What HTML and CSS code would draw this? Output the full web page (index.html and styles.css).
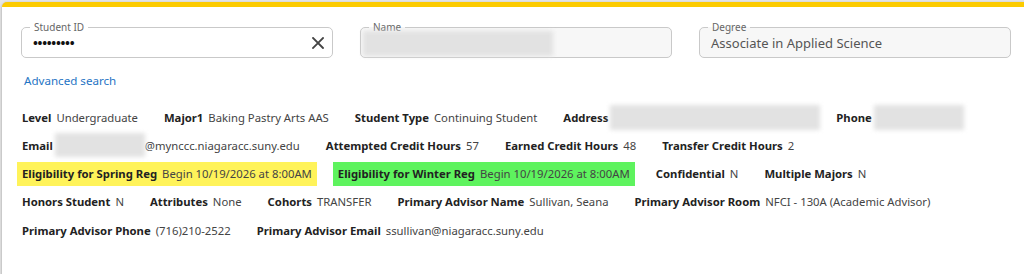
FILE: index.html
```html
<!DOCTYPE html>
<html lang="en">
<head>
<meta charset="UTF-8" />
<title>Student Lookup</title>
<link rel="stylesheet" href="styles.css">
</head>
<body>

<div class="card">
  <div class="fields">
    <fieldset class="field">
      <legend>Student ID</legend>
      <span class="field-value dots">•••••••••</span>
      <svg class="clear" width="12" height="12" viewBox="0 0 12 12">
        <path d="M1 1 L11 11 M11 1 L1 11" stroke="#444" stroke-width="1.8" stroke-linecap="square" />
      </svg>
    </fieldset>
    <fieldset class="field readonly">
      <legend>Name</legend>
      <span class="blur name-blur"></span>
    </fieldset>
    <fieldset class="field readonly">
      <legend>Degree</legend>
      <span class="field-value muted">Associate in Applied Science</span>
    </fieldset>
  </div>

  <a class="adv-link" href="#">Advanced search</a>

  <div class="details">
    <div class="row">
      <div class="item"><b>Level</b><span>Undergraduate</span></div>
      <div class="item"><b>Major1</b><span>Baking Pastry Arts AAS</span></div>
      <div class="item"><b>Student Type</b><span>Continuing Student</span></div>
      <div class="item"><b>Address</b><span class="blur addr-blur"></span></div>
      <div class="item"><b>Phone</b><span class="blur phone-blur"></span></div>
    </div>
    <div class="row">
      <div class="item"><b>Email</b><span class="blur email-blur"></span><span class="tight">@mynccc.niagaracc.suny.edu</span></div>
      <div class="item"><b>Attempted Credit Hours</b><span>57</span></div>
      <div class="item"><b>Earned Credit Hours</b><span>48</span></div>
      <div class="item"><b>Transfer Credit Hours</b><span>2</span></div>
    </div>
    <div class="row">
      <div class="item hl-yellow"><b>Eligibility for Spring Reg</b><span>Begin 10/19/2026 at 8:00AM</span></div>
      <div class="item hl-green"><b>Eligibility for Winter Reg</b><span>Begin 10/19/2026 at 8:00AM</span></div>
      <div class="item"><b>Confidential</b><span>N</span></div>
      <div class="item"><b>Multiple Majors</b><span>N</span></div>
    </div>
    <div class="row">
      <div class="item"><b>Honors Student</b><span>N</span></div>
      <div class="item"><b>Attributes</b><span>None</span></div>
      <div class="item"><b>Cohorts</b><span>TRANSFER</span></div>
      <div class="item"><b>Primary Advisor Name</b><span>Sullivan, Seana</span></div>
      <div class="item"><b>Primary Advisor Room</b><span>NFCI - 130A (Academic Advisor)</span></div>
    </div>
    <div class="row">
      <div class="item"><b>Primary Advisor Phone</b><span>(716)210-2522</span></div>
      <div class="item"><b>Primary Advisor Email</b><span>ssullivan@niagaracc.suny.edu</span></div>
    </div>
  </div>
</div>

</body>
</html>
```

FILE: styles.css
```css
body {
  margin: 0;
  background-color: #e6e6e6;
  font-family: 'Noto Sans', 'Open Sans', sans-serif;
  color: #222;
}

.card {
  margin: 2px 0 0 2px;
  height: 262px;
  padding: 14px 13px 0 19px;
  background-color: #fff;
  border-top: 5px solid #fccb00;
  border-radius: 5px 0 0 5px;
  box-shadow: 0 1px 3px rgba(0, 0, 0, 0.35);
}

.fields {
  display: grid;
  grid-template-columns: repeat(3, 312px);
  column-gap: 27px;
}

.field {
  box-sizing: border-box;
  margin: 0;
  padding: 0 8px 4px 11px;
  height: 37px;
  display: flex;
  align-items: center;
  border: 1px solid #c9c9c9;
  border-radius: 5px;
}

.field legend {
  padding: 0 4px;
  margin-left: -3px;
  font-size: 10px;
  line-height: 12px;
  color: #666;
}

.readonly {
  background-color: #f7f7f7;
}

.field-value {
  flex: 1;
  font-size: 13px;
}

.dots {
  color: #111;
  font-weight: 700;
  letter-spacing: -0.3px;
}

.muted {
  color: #555;
}

.blur {
  display: inline-block;
  background-color: #e2e2e2;
  filter: blur(2px);
}

.name-blur {
  width: 190px;
  height: 25px;
  margin-left: -9px;
}

.adv-link {
  display: inline-block;
  margin: 15px 0 0 3px;
  font-size: 11.6px;
  color: #1f74c4;
  text-decoration: none;
}

.details {
  margin: 15px 0 0 -4px;
  display: flex;
  flex-direction: column;
  row-gap: 4.3px;
  font-size: 11.3px;
}

.row {
  display: flex;
  column-gap: 16px;
  align-items: center;
  height: 24px;
}

.item {
  display: flex;
  align-items: center;
  height: 24px;
  padding: 0 5px;
  white-space: nowrap;
}

.item b {
  font-weight: 700;
  color: #222;
}

.item span {
  margin-left: 5px;
  color: #444;
}

.item span.tight {
  margin-left: 0;
}

.item span.blur {
  margin-left: 2px;
}

.addr-blur {
  width: 210px;
  height: 25px;
  margin-right: -10px;
}

.phone-blur {
  width: 90px;
  height: 25px;
}

.email-blur {
  width: 90px;
  height: 24px;
}

.hl-yellow {
  background-color: #fff35a;
}

.hl-green {
  background-color: #5ef35e;
}
```
